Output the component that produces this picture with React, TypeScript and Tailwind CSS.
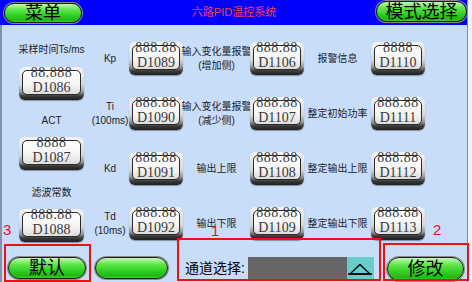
import React from 'react';

const cjk = { fontFamily: '"Liberation Sans","Noto Sans CJK SC",sans-serif' };
const serif = { fontFamily: '"Liberation Serif","Noto Serif",serif' };

const GreenOval = ({ label, className }: { label?: string; className: string }) => (
  <div
    className={`flex items-center justify-center rounded-full border-[1.5px] border-[#1c1c1c] bg-[linear-gradient(180deg,#c2f9b6_0%,#5fe649_32%,#2fcf22_65%,#1fb817_88%,#3bd02e_100%)] shadow-[0_0_0_1px_#8a8a8a] ${className}`}
  >
    {label && (
      <span className="leading-none text-black" style={cjk}>
        {label}
      </span>
    )}
  </div>
);

const Display = ({ value, addr, wide }: { value: string; addr: string; wide?: boolean }) => (
  <div
    className={`${wide ? 'w-[65px]' : 'w-[54px]'} h-[33px] rounded-[6px] bg-[linear-gradient(180deg,#f6f6f6_0%,#d6d6d6_55%,#9a9a9a_75%,#3a3a3a_88%,#1e1e1e_100%)] px-[3px] pt-[3px] pb-[5px] shadow-[0_1px_1px_rgba(0,0,0,0.35)]`}
  >
    <div className="h-full rounded-[5px] border border-[#2a2a2a] bg-[linear-gradient(180deg,#ffffff_0%,#f4f4f4_60%,#dcdcdc_100%)] flex flex-col items-center justify-between">
      <span className="-mt-[5px] text-[14px] leading-[13px] tracking-[0.5px] text-[#3a3a3a]" style={serif}>
        {value}
      </span>
      <span className="text-[14px] leading-[13px] text-[#3a3a3a]" style={serif}>
        {addr}
      </span>
    </div>
  </div>
);

const Label = ({ lines }: { lines: string[] }) => (
  <div className="flex flex-col items-center justify-center whitespace-nowrap text-[10px] leading-[14px] text-[#222]" style={cjk}>
    {lines.map((l) => (
      <span key={l}>{l}</span>
    ))}
  </div>
);

const rows = [
  { b: ['Kp'], bv: ['888.88', 'D1089'], c: ['输入变化量报警', '(增加侧)'], cv: ['888.88', 'D1106'], d: ['报警信息'], dv: ['8888', 'D1110'] },
  { b: ['Ti', '(100ms)'], bv: ['888.88', 'D1090'], c: ['输入变化量报警', '(减少侧)'], cv: ['888.88', 'D1107'], d: ['整定初始功率'], dv: ['888.88', 'D1111'] },
  { b: ['Kd'], bv: ['888.88', 'D1091'], c: ['输出上限'], cv: ['888.88', 'D1108'], d: ['整定输出上限'], dv: ['888.88', 'D1112'] },
  { b: ['Td', '(10ms)'], bv: ['888.88', 'D1092'], c: ['输出下限'], cv: ['888.88', 'D1109'], d: ['整定输出下限'], dv: ['888.88', 'D1113'] },
];

export default function App() {
  return (
    <div className="relative w-[472px] h-[282px] overflow-hidden bg-[#eef2f7]">
      <div className="w-[468px] h-full flex flex-col border-r border-[#7e8ca2]">
        {/* header */}
        <div className="h-[25px] shrink-0 bg-[#0000ff] flex items-center pl-[4px]">
          <GreenOval label="菜单" className="w-[78px] h-[20px] mt-[1px] text-[18px]" />
          <div className="flex-1 text-center text-[11px] text-[#ff3b3b] pl-[10px]" style={cjk}>
            六路PID温控系统
          </div>
          <GreenOval label="模式选择" className="w-[91px] h-[21px] -mt-[2px] text-[18px]" />
        </div>

        {/* body */}
        <div className="flex-1 flex flex-col bg-[#c8ddf9] border-l-2 border-[#8592a8]">
          <div className="flex">
            <div className="w-[89px] pl-[17px]">
              <div className="w-[65px] flex flex-col items-center">
                <div className="mt-[18px]">
                  <Label lines={['采样时间Ts/ms']} />
                </div>
                <div className="mt-[10px]">
                  <Display wide value="88.888" addr="D1086" />
                </div>
                <div className="mt-[14px]">
                  <Label lines={['ACT']} />
                </div>
                <div className="mt-[9px]">
                  <Display wide value="8888" addr="D1087" />
                </div>
                <div className="mt-[16px]">
                  <Label lines={['滤波常数']} />
                </div>
                <div className="mt-[9px]">
                  <Display wide value="888.88" addr="D1088" />
                </div>
              </div>
            </div>

            <div className="mt-[6px] grid grid-cols-[38px_54px_67px_54px_67px_54px] grid-rows-[repeat(4,55px)] items-center">
              {rows.map((r) => (
                <React.Fragment key={r.bv[1]}>
                  <Label lines={r.b} />
                  <Display value={r.bv[0]} addr={r.bv[1]} />
                  <Label lines={r.c} />
                  <Display value={r.cv[0]} addr={r.cv[1]} />
                  <Label lines={r.d} />
                  <Display value={r.dv[0]} addr={r.dv[1]} />
                </React.Fragment>
              ))}
            </div>
          </div>

          {/* bottom bar */}
          <div className="flex-1 flex items-center pl-[6px]">
            <GreenOval label="默认" className="w-[78px] h-[22px] mt-[2px] text-[18px]" />
            <GreenOval className="ml-[9px] w-[73px] h-[22px] mt-[2px]" />
            <span className="ml-[17px] mt-[3px] text-[14px] text-black" style={cjk}>
              通道选择:
            </span>
            <div className="ml-[3px] mt-[4px] w-[99px] h-[24px] bg-[#666666]" />
            <div className="mt-[4px] w-[27px] h-[24px] bg-[#66cccc] flex items-center justify-center">
              <svg width="26" height="14" viewBox="0 0 26 14">
                <polygon points="3,12 13,2.5 23,12" fill="none" stroke="#000" strokeWidth="1.3" />
                <line x1="1" y1="12" x2="25" y2="12" stroke="#000" strokeWidth="1.3" />
              </svg>
            </div>
            <GreenOval label="修改" className="ml-[13px] w-[77px] h-[24px] mt-[5px] text-[18px]" />
          </div>
        </div>
      </div>

      {/* red annotation boxes */}
      <div className="absolute left-[4px] top-[244px] w-[87px] h-[38px] border-2 border-[#ee1111]" />
      <div className="absolute left-[177px] top-[238px] w-[204px] h-[43px] border-2 border-[#ee1111]" />
      <div className="absolute left-[383px] top-[243px] w-[86px] h-[38px] border-2 border-[#ee1111]" />
      <span className="absolute left-[3px] top-[221px] text-[15px] leading-[18px] text-[#ee1111]" style={cjk}>3</span>
      <span className="absolute left-[211px] top-[222px] text-[15px] leading-[18px] text-[#ee1111]" style={cjk}>1</span>
      <span className="absolute left-[433px] top-[221px] text-[15px] leading-[18px] text-[#ee1111]" style={cjk}>2</span>
    </div>
  );
}
